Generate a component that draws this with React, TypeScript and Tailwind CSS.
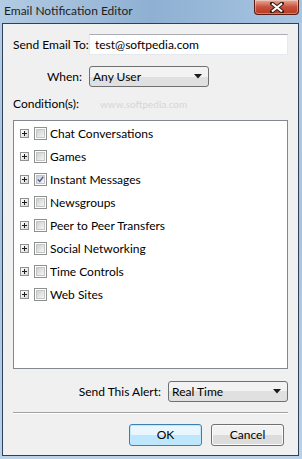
import React from 'react'

const font = { fontFamily: 'Lato, "Noto Sans", sans-serif' }

const conditions = [
  { label: 'Chat Conversations', checked: false },
  { label: 'Games', checked: false },
  { label: 'Instant Messages', checked: true },
  { label: 'Newsgroups', checked: false },
  { label: 'Peer to Peer Transfers', checked: false },
  { label: 'Social Networking', checked: false },
  { label: 'Time Controls', checked: false },
  { label: 'Web Sites', checked: false },
]

function Arrow() {
  return (
    <svg width="8" height="5" viewBox="0 0 8 5" className="shrink-0">
      <path d="M0 0h8L4 4.5z" fill="#1a1a1a" />
    </svg>
  )
}

function Combo({ value, className }: { value: string; className: string }) {
  return (
    <div
      className={`flex items-center justify-between rounded-[3px] border border-[#707070] bg-gradient-to-b from-[#f2f2f2] from-50% to-[#e0e0e0] to-50% pl-[3px] pr-[6px] text-[12px] text-black ${className}`}
    >
      <span className="leading-none">{value}</span>
      <Arrow />
    </div>
  )
}

function PlusBox() {
  return (
    <div className="relative h-[9px] w-[9px] shrink-0 border border-[#919191] bg-gradient-to-br from-white to-[#d8d8d8]">
      <div className="absolute left-[1px] top-[3px] h-px w-[5px] bg-[#1c1c1c]" />
      <div className="absolute left-[3px] top-[1px] h-[5px] w-px bg-[#1c1c1c]" />
    </div>
  )
}

function CheckBox({ checked }: { checked: boolean }) {
  return (
    <div className="flex h-[13px] w-[13px] shrink-0 items-center justify-center border border-[#8e8f8f] bg-white p-px">
      <div className="flex h-full w-full items-center justify-center border border-[#c5c5c5] bg-gradient-to-br from-[#cbcfd5] to-[#f6f6f6]">
        {checked && (
          <svg width="9" height="9" viewBox="0 0 9 9">
            <path d="M1 4.5L3.5 7L8 1" fill="none" stroke="#4a5f97" strokeWidth="1.8" />
          </svg>
        )}
      </div>
    </div>
  )
}

export default function App() {
  return (
    <div
      className="relative flex h-[459px] w-[302px] flex-col overflow-hidden bg-gradient-to-b from-[#b5cde6] via-[#a6c2df] to-[#b9d2ea]"
      style={font}
    >
      {/* title bar */}
      <div className="flex h-[23px] shrink-0 items-start justify-between bg-gradient-to-r from-[#b3cbe4] via-[#8fb0d2] to-[#a8c5e3]">
        <span className="pl-[4px] pt-[4px] text-[12px] leading-[14px] text-[#1e1e1e]">
          Email Notification Editor
        </span>
        <div className="mr-[3px] flex h-[15px] w-[45px] items-center justify-center rounded-b-[4px] border border-t-0 border-[#5a1c12] bg-gradient-to-b from-[#e9a99a] via-[#c8503a] to-[#b83a22] shadow-[inset_0_0_0_1px_rgba(255,255,255,0.35)]">
          <svg width="14" height="11" viewBox="0 0 14 11">
            <path
              d="M2 1.5L12 9.5M12 1.5L2 9.5"
              stroke="#3a1a14"
              strokeWidth="4"
              strokeLinecap="square"
            />
            <path d="M2 1.5L12 9.5M12 1.5L2 9.5" stroke="#fff" strokeWidth="2.2" />
          </svg>
        </div>
      </div>

      {/* client area */}
      <div className="relative mb-[3px] ml-[2px] mr-[3px] flex flex-1 flex-col border border-[#2f4156] bg-[#f0f0f0] px-[10px] pt-[10px] text-[12px] text-black">
        <div className="flex h-[21px] items-center">
          <span className="w-[69px] shrink-0 whitespace-nowrap text-right leading-none">Send Email To:</span>
          <div className="ml-[7px] flex h-[21px] flex-1 items-center border border-[#e3e9ef] border-t-[#abadb3] bg-white pl-[5px] leading-none">
            test@softpedia.com
          </div>
        </div>

        <div className="mt-[11px] flex h-[21px] items-center">
          <span className="w-[69px] shrink-0 text-right leading-none">When:</span>
          <Combo value="Any User" className="ml-[7px] h-[21px] w-[120px]" />
        </div>

        <div className="mt-[10px] flex h-[14px] items-center">
          <span className="leading-none">Condition(s):</span>
          <span className="ml-[21px] text-[10px] leading-none text-[#d6d6d6]">www.softpedia.com</span>
        </div>

        <div className="mt-[9px] flex h-[249px] flex-col border border-[#828790] bg-white pl-[6px] pt-px">
          {conditions.map(({ label, checked }) => (
            <div key={label} className="flex h-[23px] items-center">
              <PlusBox />
              <div className="ml-[5px]">
                <CheckBox checked={checked} />
              </div>
              <span className="ml-[3px] leading-none">{label}</span>
            </div>
          ))}
        </div>

        <div className="mt-[12px] flex h-[21px] items-center justify-end">
          <span className="mr-[7px] leading-none">Send This Alert:</span>
          <Combo value="Real Time" className="h-[21px] w-[120px]" />
        </div>

        <div className="mt-[10px] h-[2px] border-t border-b border-t-[#a0a0a0] border-b-white" />

        <div className="mt-[10px] flex justify-end gap-[9px] pr-[4px]">
          <button className="h-[22px] w-[73px] rounded-[3px] border border-[#3c7fb1] bg-gradient-to-b from-[#eaf6fd] from-50% to-[#bee6fd] to-50% leading-none shadow-[inset_0_0_0_1px_#bfe7fe]">
            OK
          </button>
          <button className="h-[22px] w-[73px] rounded-[3px] border border-[#707070] bg-gradient-to-b from-[#f2f2f2] from-50% to-[#dcdcdc] to-50% leading-none shadow-[inset_0_0_0_1px_#fbfbfb]">
            Cancel
          </button>
        </div>
      </div>
    </div>
  )
}
